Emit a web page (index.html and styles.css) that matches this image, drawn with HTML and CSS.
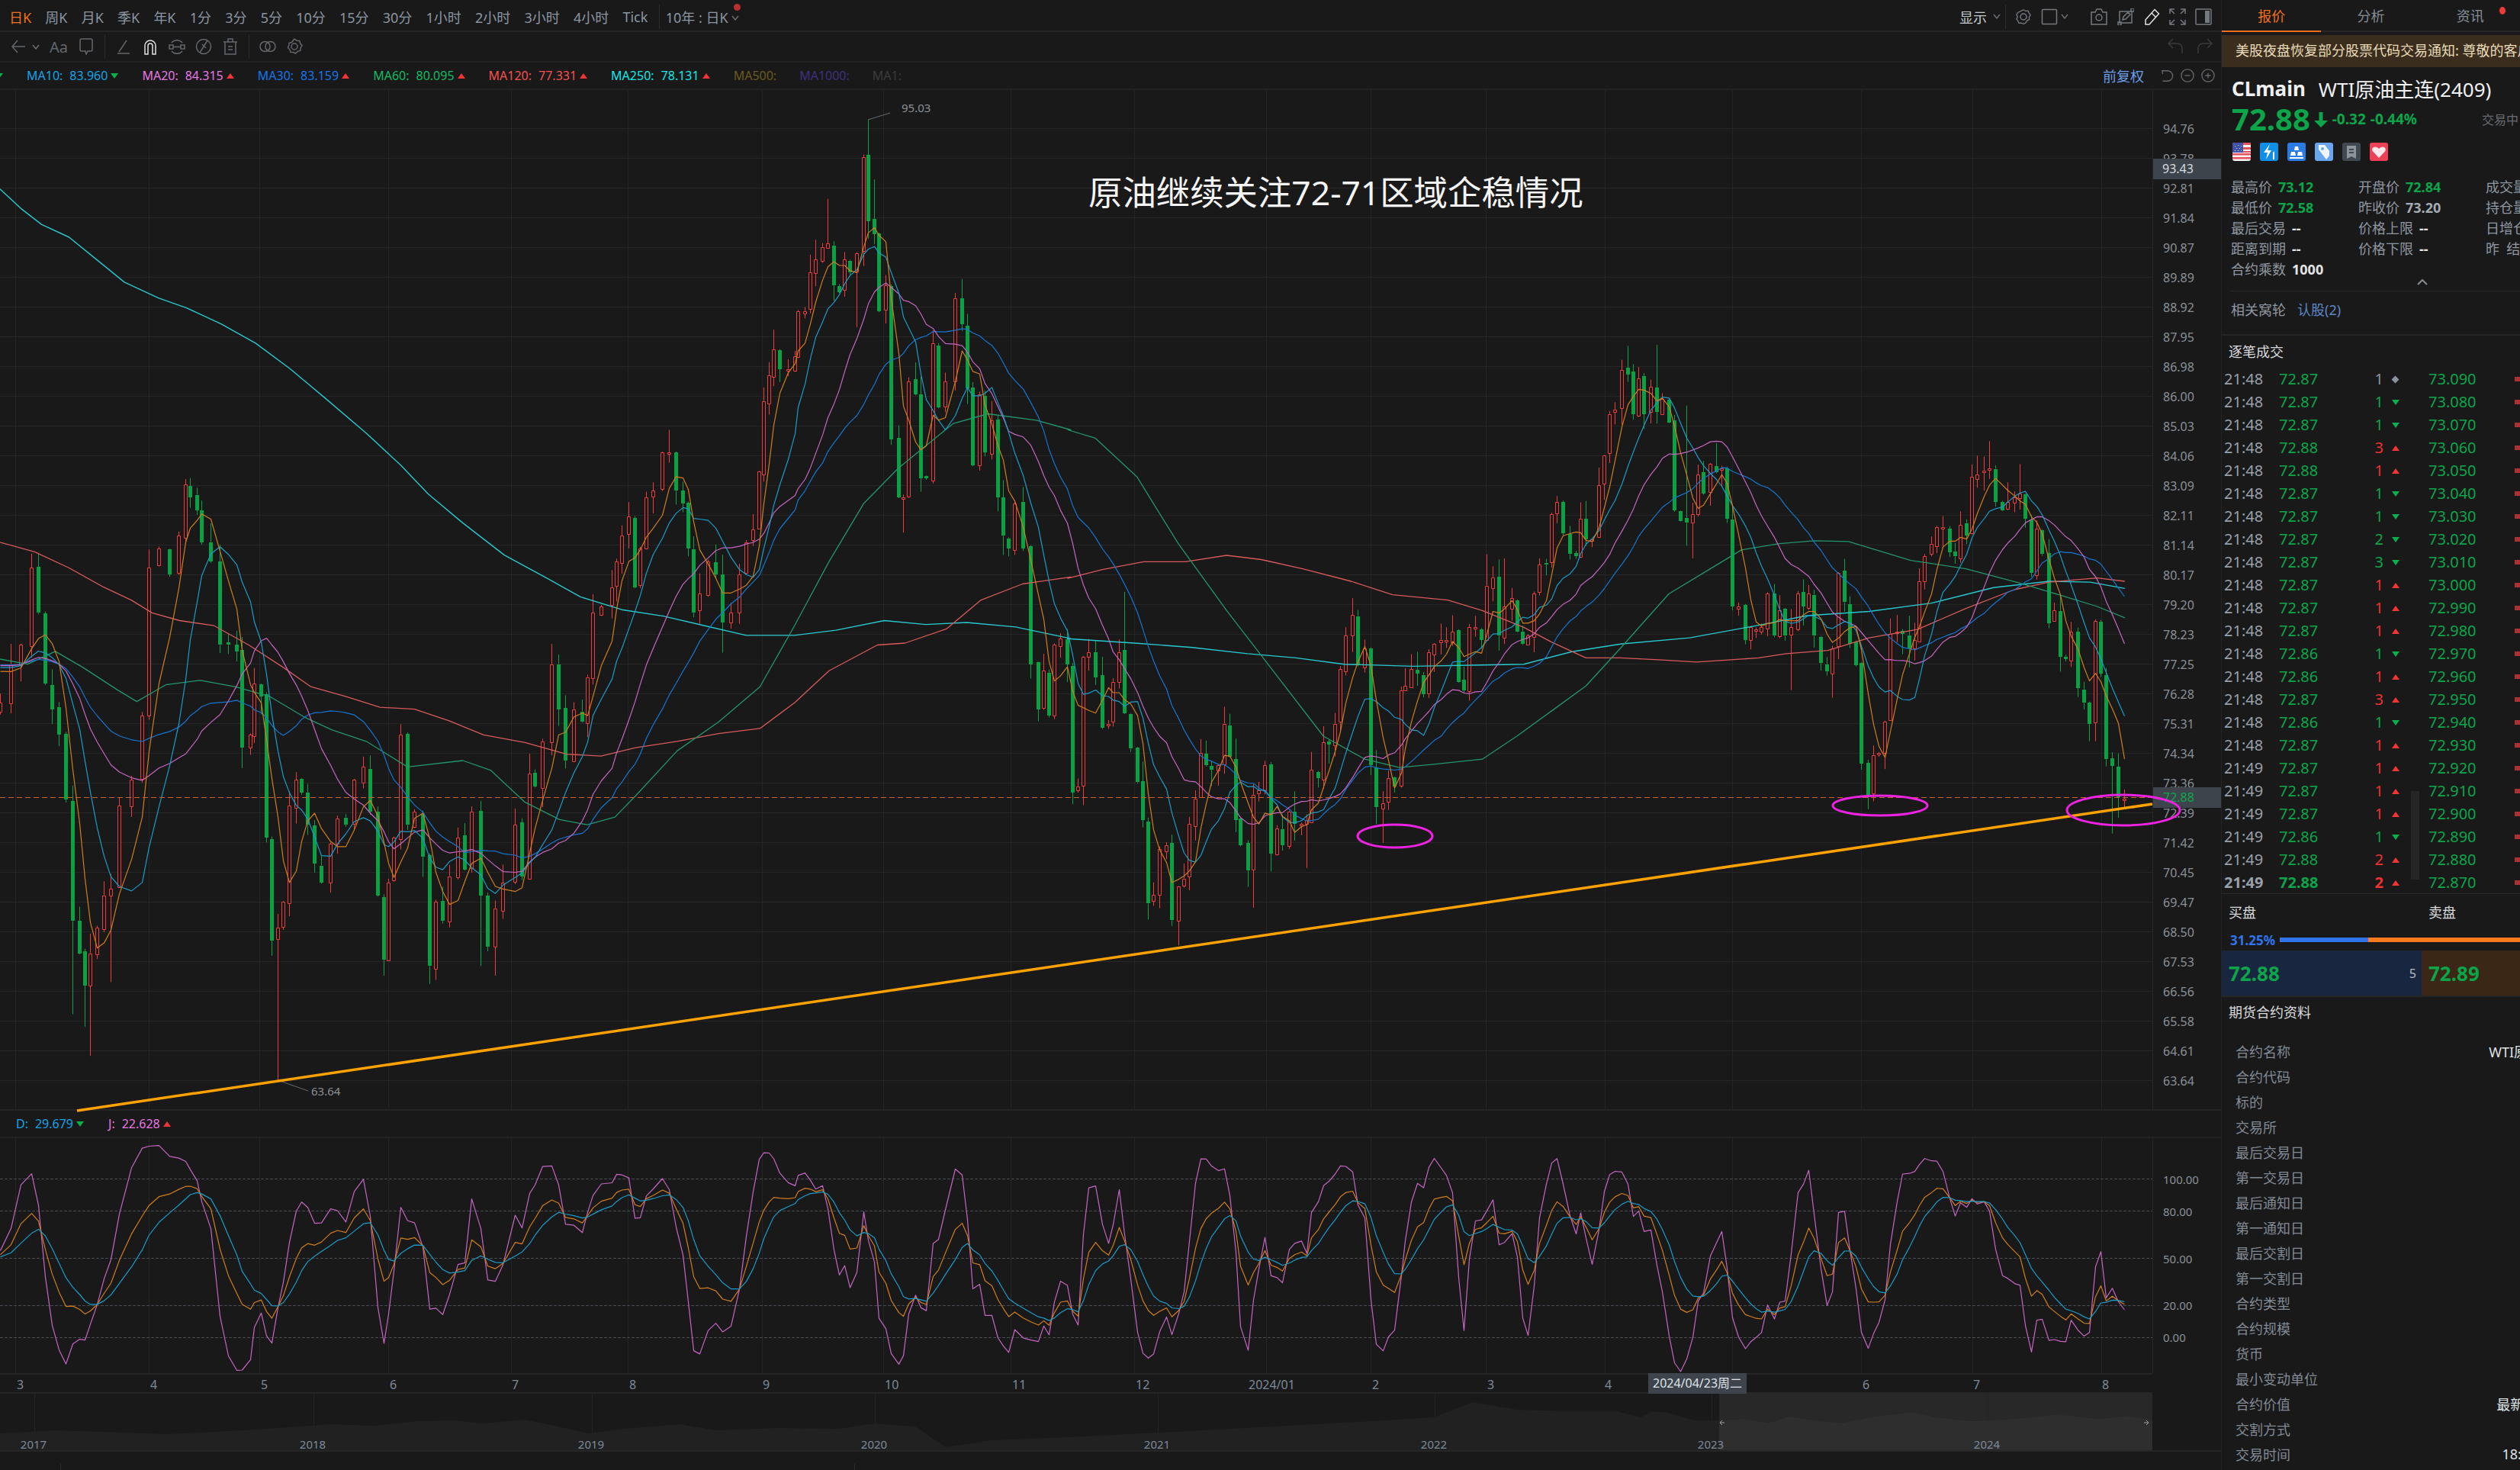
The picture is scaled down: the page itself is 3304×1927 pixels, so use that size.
FILE: index.html
```html
<!DOCTYPE html>
<html lang="zh-CN">
<head>
<meta charset="utf-8">
<title>CLmain WTI原油主连</title>
<link rel="stylesheet" href="styles.css">
</head>
<body>
<div class="app">
  <main class="main">
    <header class="topbar">
      <nav class="periods">
        <span class="period on">日K</span><span class="period">周K</span><span class="period">月K</span><span class="period">季K</span><span class="period">年K</span><span class="period">1分</span><span class="period">3分</span><span class="period">5分</span><span class="period">10分</span><span class="period">15分</span><span class="period">30分</span><span class="period">1小时</span><span class="period">2小时</span><span class="period">3小时</span><span class="period">4小时</span><span class="period">Tick</span>
        <i class="vsep"></i>
        <span class="period range">10年 : 日K<i class="reddot"></i></span>
        <svg class="chev" viewBox="0 0 10 7"><path d="M1 1l4 5 4-5"/></svg>
      </nav>
      <div class="top-tools">
        <div class="group show"><span class="show-label">显示</span><svg class="chev" viewBox="0 0 10 7"><path d="M1 1l4 5 4-5"/></svg></div>
        <i class="vsep tall"></i>
        <svg class="ico" viewBox="0 0 22 22"><path d="M11 1l3 1.5 3.6-.2 1.6 3.2 2 3-2 3 .2 3.6-3.2 1.6L14 20l-3 1.400L8 20l-3.600.2-1.600-3.200-2-3 1.800-3-1.800-3 2-3.200L8 2.300z" transform="translate(1.100 1.100) scale(.9)"/><circle cx="11" cy="11" r="4"/></svg>
        <div class="group tight"><svg class="ico" viewBox="0 0 22 22"><rect x="1.500" y="1.500" width="19" height="19" rx="1"/></svg><svg class="chev" viewBox="0 0 10 7"><path d="M1 1l4 5 4-5"/></svg></div>
        <svg class="ico far" viewBox="0 0 24 24"><path d="M2 6h5l2-4h6l2 4h5v16H2z"/><circle cx="12" cy="13" r="4"/></svg>
        <svg class="ico" viewBox="0 0 22 22"><path d="M3 4h16v15H3z"/><path d="M1 18h4v4H1zM18 0h4v4h-4zM7 15l1-4 6-6 3 3-6 6z"/></svg>
        <svg class="ico bright" viewBox="0 0 22 22"><path d="M15 1.500l5.500 5.500L8 21H3v-6z"/><path d="M11 6l5.500 5.500"/></svg>
        <svg class="ico" viewBox="0 0 22 22"><path d="M1 7V1h6M15 1h6v6M21 15v6h-6M7 21H1v-6M2 2l5 5M20 2l-5 5M20 20l-5-5M2 20l5-5"/></svg>
        <svg class="ico" viewBox="0 0 22 22"><rect x="1" y="1" width="20" height="20" rx="1"/><rect class="solid" x="13" y="3" width="6" height="16"/></svg>
      </div>
    </header>

    <div class="toolbar">
      <svg class="ico dim" viewBox="0 0 22 22"><path d="M20 11H3M10 3l-7 8 7 8"/></svg>
      <svg class="chev small" viewBox="0 0 10 7"><path d="M1 1l4 5 4-5"/></svg>
      <span class="aa">Aa</span>
      <svg class="ico dim" viewBox="0 0 22 22"><path d="M5 1h12a2 2 0 012 2v12a2 2 0 01-2 2h-4l-2 4-1-4H5a2 2 0 01-2-2V3a2 2 0 012-2z"/></svg>
      <i class="vsep short"></i>
      <svg class="ico dim" viewBox="0 0 22 22"><path d="M3 20h16M5 18L15 3"/></svg>
      <svg class="ico bright" viewBox="0 0 22 22"><path d="M4 21V10a7 7 0 0114 0v11h-4V10a3 3 0 00-6 0v11z"/></svg>
      <svg class="ico dim" viewBox="0 0 22 22"><path d="M1 9h5v5H1zM16 9h5v5h-5zM6 11.500h10M4 6a9 9 0 0114 0M18 17a9 9 0 01-14 0"/></svg>
      <svg class="ico dim" viewBox="0 0 22 22"><circle cx="11" cy="11" r="9.500"/><path d="M6 19L16 3M9 8l5 5"/></svg>
      <svg class="ico dim" viewBox="0 0 22 22"><path d="M2 5h18M8 5V1h6v4M4 5v16h14V5M8 11h6M8 15h6"/></svg>
      <i class="vsep short"></i>
      <svg class="ico dim" viewBox="0 0 22 22"><circle cx="7.500" cy="11" r="6.500"/><circle cx="14.500" cy="11" r="6.500"/></svg>
      <svg class="ico dim" viewBox="0 0 22 22"><path d="M11 1l3 2.200 3.700.2 1 3.400 2.300 3-1.800 2.900-.5 3.700-3.500 1-2.700 2.600-3-1.400-3.600-.2-1-3.400-2.400-2.700 1.400-3.200L4 6.500l3.400-1z"/><circle cx="11" cy="11" r="4"/></svg>
      <div class="undo">
        <svg class="ico faint" viewBox="0 0 22 22"><path d="M8 1L2 7l6 6M2 7h12a6 6 0 016 6v7"/></svg>
        <svg class="ico faint" viewBox="0 0 22 22"><path d="M14 1l6 6-6 6M20 7H8a6 6 0 00-6 6v7"/></svg>
      </div>
    </div>

    <div class="legend">
      <i class="tri down lead"></i>
      <span class="ma"><b class="c-ma10">MA10:</b><b class="c-ma10">83.960</b><i class="tri down"></i></span>
      <span class="ma"><b class="c-ma20">MA20:</b><b class="c-ma20">84.315</b><i class="tri up"></i></span>
      <span class="ma"><b class="c-ma30">MA30:</b><b class="c-ma30">83.159</b><i class="tri up"></i></span>
      <span class="ma"><b class="c-ma60">MA60:</b><b class="c-ma60">80.095</b><i class="tri up"></i></span>
      <span class="ma"><b class="c-ma120">MA120:</b><b class="c-ma120">77.331</b><i class="tri up"></i></span>
      <span class="ma"><b class="c-ma250">MA250:</b><b class="c-ma250">78.131</b><i class="tri up"></i></span>
      <span class="ma dimma"><b class="c-ma500">MA500:</b></span>
      <span class="ma dimma"><b class="c-ma1000">MA1000:</b></span>
      <span class="ma dimma"><b class="c-ma1">MA1:</b></span>
      <div class="adjust">
        <span class="adj-label">前复权</span>
        <svg class="ico dim small" viewBox="0 0 20 20"><path d="M3 2l1 6M3 3h8a7 7 0 010 15H4"/></svg>
        <svg class="ico dim small" viewBox="0 0 20 20"><circle cx="10" cy="10" r="9"/><path d="M6 10h8"/></svg>
        <svg class="ico dim small" viewBox="0 0 20 20"><circle cx="10" cy="10" r="9"/><path d="M6 10h8M10 6v8"/></svg>
      </div>
    </div>

    <section class="pane price-pane">
      <div class="plot">
        <svg id="priceChart" class="canvas" viewBox="0 118 2822 1336" width="2822" height="1336"></svg>
        <h1 class="headline">原油继续关注72-71区域企稳情况</h1>
      </div>
      <div class="axis" id="priceAxis">
        <span class="axis-box cross">93.43</span>
        <span class="axis-box last">72.88</span>
      </div>
    </section>

    <div class="kdj-legend">
      <span class="ma"><b class="c-ma10">D:</b><b class="c-ma10">29.679</b><i class="tri down"></i></span>
      <span class="ma"><b class="c-ma20">J:</b><b class="c-ma20">22.628</b><i class="tri up"></i></span>
    </div>

    <section class="pane kdj-pane">
      <div class="plot">
        <svg id="kdjChart" class="canvas" viewBox="0 1492 2822 308" width="2822" height="308"></svg>
      </div>
      <div class="kdj-axis"><span>100.00</span><span>80.00</span><span>50.00</span><span>20.00</span><span>0.00</span></div>
    </section>

    <div class="time-axis" id="timeAxis">
      <span class="axis-box stamp">2024/04/23周二</span>
    </div>

    <section class="pane overview-pane">
      <div class="plot">
        <svg id="overview" class="canvas" viewBox="0 1827 2822 74" width="2822" height="74"></svg>
      </div>
    </section>

    <nav class="indicators">
      <span class="ind-lead">JS &gt;</span><i class="vsep mini"></i>
      <span>WMSR</span><span>MAVOL</span><span>VOL</span><span>MACD</span><span class="on">KDJ</span><span>RSI</span><span>ARBR</span><span>CR</span><span>DMA</span><span>EMV</span><span>BIAS</span><span>CCI</span><span>DMI</span><span>MTM</span><span>OSC</span><span>PSY</span><span>VR</span><i class="vsep mini"></i><span class="on">财报转折</span>
    </nav>
  </main>

  <aside class="panel">
    <div class="tabs">
      <span class="tab active">报价</span>
      <span class="tab">分析</span>
      <span class="tab">资讯<i class="reddot tabdot"></i></span>
    </div>
    <div class="notice">美股夜盘恢复部分股票代码交易通知: 尊敬的客户，您好</div>
    <div class="name"><b>CLmain</b><span>WTI原油主连(2409)</span></div>
    <div class="quote">
      <b class="last-price">72.88</b>
      <svg class="arrow" viewBox="0 0 18 20"><path d="M6.500 0h5v11H18L9 20 0 11h6.500z"/></svg>
      <b class="change">-0.32</b><b class="change">-0.44%</b>
      <span class="status">交易中</span>
    </div>
    <div class="badges">
      <svg class="badge" viewBox="0 0 24 24"><rect width="24" height="24" rx="3" fill="#f4f4f4"/><path d="M0 14h24v2.500H0zM0 19h24v2.500H0z" fill="#e8505b"/><path d="M3 0h21v3H0a3 3 0 013-3zM12 6h12v3H12zM12 11h12v2H12z" fill="#e8505b"/><path d="M3 0h11v13H0V3a3 3 0 013-3z" fill="#3f51b5"/><path d="M3 4h1v1H3zM7 3h1v1H7zM11 4h1v1h-1zM5 7h1v1H5zM9 7h1v1H9zM3 10h1v1H3zM7 10h1v1H7zM11 10h1v1h-1z" fill="#fff"/></svg>
      <svg class="badge" viewBox="0 0 24 24"><rect width="24" height="24" rx="3" fill="#0f8fe8"/><path d="M13 2L5 13h5l-2 9 7-12h-5z" fill="#fff"/><path d="M17 13l2-2v11h-2z" fill="#fff"/></svg>
      <svg class="badge" viewBox="0 0 24 24"><rect width="24" height="24" rx="3" fill="#2a7be4"/><path d="M10 5h4l1 5H9zM5 12h5l1 5H4zM14 12h5l1 5h-7zM3 19h18v2H3z" fill="#fff"/></svg>
      <svg class="badge" viewBox="0 0 24 24"><rect width="24" height="24" rx="3" fill="#6aa5ef"/><path d="M5 3h8l6 8v6l-4 5-10-13z" fill="#f1f6fd"/><circle cx="10" cy="8" r="2" fill="#6aa5ef"/></svg>
      <svg class="badge" viewBox="0 0 24 24"><rect width="24" height="24" rx="3" fill="#414850"/><path d="M6 4h12v17l-6-3-6 3z" fill="#8d949c"/><path d="M9 8h6v2H9zM9 12h6v2H9z" fill="#414850"/></svg>
      <svg class="badge" viewBox="0 0 24 24"><rect width="24" height="24" rx="3" fill="#ee4057"/><path d="M12 20L4 11.500C1 7 7 2.500 12 8c5-5.500 11-1 8 3.500z" fill="#fde8ea"/></svg>
    </div>
    <div class="stats">
      <div class="stat"><span>最高价</span><b class="green">73.12</b></div><div class="stat"><span>开盘价</span><b class="green">72.84</b></div><div class="stat"><span>成交量</span><b class="plain">--</b></div>
      <div class="stat"><span>最低价</span><b class="green">72.58</b></div><div class="stat"><span>昨收价</span><b class="muted">73.20</b></div><div class="stat"><span>持仓量</span><b class="plain">--</b></div>
      <div class="stat"><span>最后交易</span><b class="plain">--</b></div><div class="stat"><span>价格上限</span><b class="plain">--</b></div><div class="stat"><span>日增仓</span><b class="plain">--</b></div>
      <div class="stat"><span>距离到期</span><b class="plain">--</b></div><div class="stat"><span>价格下限</span><b class="plain">--</b></div><div class="stat"><span>昨&nbsp;&nbsp;结算</span><b class="plain">--</b></div>
      <div class="stat"><span>合约乘数</span><b class="plain">1000</b></div>
    </div>
    <div class="collapse"><svg viewBox="0 0 14 8"><path d="M1 7l6-6 6 6"/></svg></div>
    <div class="warrants"><span>相关窝轮</span><a>认股(2)</a></div>
    <h2 class="section-title first">逐笔成交</h2>
    <div class="ticks" id="ticks"><i class="scroll"></i></div>
    <div class="book-head"><span>买盘</span><span>卖盘</span></div>
    <div class="ratio"><b>31.25%</b><div class="ratio-bar"><i class="bid-part"></i></div></div>
    <div class="book">
      <div class="bid"><b>72.88</b><span>5</span></div>
      <div class="ask"><b>72.89</b></div>
    </div>
    <h2 class="section-title second">期货合约资料</h2>
    <dl class="contract">
      <div><dt>合约名称</dt><dd>WTI原油主连</dd></div>
      <div><dt>合约代码</dt><dd></dd></div>
      <div><dt>标的</dt><dd></dd></div>
      <div><dt>交易所</dt><dd></dd></div>
      <div><dt>最后交易日</dt><dd></dd></div>
      <div><dt>第一交易日</dt><dd></dd></div>
      <div><dt>最后通知日</dt><dd></dd></div>
      <div><dt>第一通知日</dt><dd></dd></div>
      <div><dt>最后交割日</dt><dd></dd></div>
      <div><dt>第一交割日</dt><dd></dd></div>
      <div><dt>合约类型</dt><dd></dd></div>
      <div><dt>合约规模</dt><dd></dd></div>
      <div><dt>货币</dt><dd></dd></div>
      <div><dt>最小变动单位</dt><dd></dd></div>
      <div><dt>合约价值</dt><dd>最新价*100</dd></div>
      <div><dt>交割方式</dt><dd></dd></div>
      <div><dt>交易时间</dt><dd>18:00-5:00</dd></div>
    </dl>
  </aside>
</div>
<script src="chart.js"></script>
</body>
</html>
```

FILE: styles.css
```css
* { box-sizing: border-box; }
html, body { margin: 0; padding: 0; background: #191919; }
body {
  width: 3304px; height: 1927px; overflow: hidden;
  font-family: "Noto Sans", "Noto Sans CJK SC", sans-serif;
  font-size: 18px; color: #8f97a1;
}
i { font-style: normal; }
b { font-weight: 400; }
svg { display: block; }

.app { display: flex; width: 3304px; height: 1927px; }
.main { width: 2912px; flex: none; display: flex; flex-direction: column; overflow: hidden; }

/* top bar */
.topbar { height: 42px; flex: none; display: flex; align-items: center; justify-content: space-between; border-bottom: 2px solid #252525; padding-top: 3px; }
.periods { display: flex; align-items: center; gap: 18.2px; padding-left: 12px; color: #8b96a3; }
.period { position: relative; white-space: nowrap; }
.period.on { color: #f2701d; }
.range { margin-left: -10px; }
.vsep { width: 1px; height: 32px; background: #2c2c2c; display: block; flex: none; }
.periods .vsep { margin-left: -4px; }
.vsep.mini { height: 30px; }
.reddot { position: absolute; width: 9px; height: 9px; border-radius: 50%; background: #b92f2f; right: -16px; top: -4px; }
.chev { width: 10px; height: 7px; fill: none; stroke: #6b7178; stroke-width: 1.4; flex: none; }
.periods .chev { margin-left: -14px; margin-top: 3px; }
.top-tools { display: flex; align-items: center; gap: 12px; padding-right: 12px; }
.group { display: flex; align-items: center; gap: 8px; }
.group.tight { gap: 4px; }
.group.show { margin-right: -6px; }
.show-label { color: #c6c9cd; }
.ico { width: 22px; height: 22px; fill: none; stroke: #74797f; stroke-width: 1.5; flex: none; }
.ico.far { width: 24px; height: 24px; margin-left: 16px; }
.ico.bright { stroke: #e2e2e2; }
.ico.dim { stroke: #63676c; }
.ico.faint { stroke: #383a3c; }
.ico.small { width: 18px; height: 18px; }
.ico .solid { fill: #74797f; stroke: none; }

/* tool row */
.toolbar { height: 40px; flex: none; display: flex; align-items: center; gap: 13px; padding-left: 13px; border-bottom: 2px solid #232323; }
.chev.small { margin-left: -6px; }
.aa { width: 24px; color: #63676c; font-size: 20px; }
.undo { margin-left: auto; display: flex; gap: 17px; padding-right: 10px; }

/* moving-average legend */
.legend { height: 36px; flex: none; display: flex; align-items: center; gap: 31px; padding-left: 2px; font-size: 16px; white-space: nowrap; border-bottom: 2px solid #232323; overflow: hidden; }
.ma { display: flex; align-items: center; gap: 9px; }
.ma .tri { margin-left: -5px; }
.dimma { margin-right: -1px; }
.tri { display: block; width: 0; height: 0; border-left: 5.5px solid transparent; border-right: 5.5px solid transparent; flex: none; }
.tri.down { border-top: 7px solid #0dae4c; }
.tri.up { border-bottom: 7px solid #f23535; }
.tri.lead { margin-left: -8px; }
.c-ma10 { color: #16a3e6; }
.c-ma20 { color: #e678e2; }
.c-ma30 { color: #1476ec; }
.c-ma60 { color: #14bb63; }
.c-ma120 { color: #f65050; }
.c-ma250 { color: #16e7e7; }
.c-ma500 { color: #6b5a1c; }
.c-ma1000 { color: #40307f; }
.c-ma1 { color: #3c3c3c; }
.adjust { margin-left: auto; display: flex; align-items: center; gap: 9px; padding-right: 8px; }
.adj-label { color: #6a9de8; font-size: 18px; margin-right: 12px; }

/* chart panes */
.pane { display: flex; flex: none; }
.plot { position: relative; width: 2822px; flex: none; }
.canvas { position: relative; z-index: 2; overflow: visible; }
.price-pane { height: 1336px; }
.kdj-pane { height: 308px; }
.overview-pane { height: 74px; }
.headline { position: absolute; z-index: 3; left: 1427px; top: 105px; margin: 0; font-size: 44.4px; line-height: 58px; font-weight: 400; color: #f4f4f4; white-space: nowrap; }
.axis { position: relative; width: 90px; flex: none; padding-top: 32px; font-size: 16px; color: #8a9097; border-left: 1px solid #262626; }
.axis-label { display: block; height: 39px; line-height: 39px; padding-left: 13px; }
.axis-box { position: absolute; z-index: 1; background: #3d444c; height: 27px; line-height: 27px; font-size: 16px; white-space: nowrap; }
.axis-box.cross { left: 0; width: 90px; top: 90px; padding-left: 12px; color: #d6dade; }
.axis-box.last { left: 0; width: 90px; top: 914px; padding-left: 13px; color: #0da84b; }
.kdj-legend { height: 38px; flex: none; display: flex; align-items: center; gap: 32px; padding-left: 21px; font-size: 16px; border-top: 2px solid #252525; border-bottom: 2px solid #232323; }
.kdj-axis { width: 90px; flex: none; display: grid; grid-template-rows: 42px 62px 61px 42px 24px; align-content: start; padding: 42px 0 0 13px; font-size: 15px; line-height: 24px; color: #8a9097; border-left: 1px solid #262626; }
.time-axis { position: relative; height: 27px; flex: none; width: 2822px; border-top: 2px solid #262626; border-bottom: 2px solid #262626; font-size: 16px; line-height: 27px; color: #7d8a9a; }
.time-axis span { position: absolute; top: 0; }
.axis-box.stamp { left: 2161px; width: 129px; top: -2px; height: 27px; padding-left: 6px; color: #dfe3e8; z-index: 2; }
.indicators { height: 26px; flex: none; display: flex; gap: 30px; padding: 22px 0 0 40px; font-size: 15px; line-height: 22px; color: #8a9097; border-top: 2px solid #262626; white-space: nowrap; overflow: hidden; }
.indicators .on { color: #f2701d; }
.indicators .vsep { margin: -6px -16px 0 -16px; }
.ind-lead { color: #7d8185; }

/* right panel */
.panel { width: 392px; flex: none; overflow: hidden; border-left: 1px solid #242424; white-space: nowrap; position: relative; }
.tabs { height: 42px; display: flex; border-bottom: 2px solid #262626; font-size: 18px; }
.tab { position: relative; width: 132px; height: 42px; line-height: 42px; text-align: center; color: #848c96; }
.tab.active { color: #f2701d; border-bottom: 2px solid #f2701d; }
.reddot.tabdot { background: #ef3a3a; width: 8px; height: 10px; right: 19px; top: 9px; }
.notice { margin-top: 4px; height: 42px; line-height: 41px; padding-left: 18px; background: #3a2d1e; color: #e9dcb9; font-size: 18px; overflow: hidden; }
.name { margin-top: 8px; height: 40px; display: flex; align-items: center; gap: 17px; padding-left: 13px; font-size: 26px; color: #eef0f2; }
.name b { font-weight: 700; }
.quote { height: 40px; display: flex; align-items: center; padding-left: 13px; color: #0ca54a; position: relative; }
.last-price { font-size: 40px; font-weight: 700; line-height: 40px; }
.arrow { width: 18px; height: 20px; fill: #0ca54a; margin: 2px 6px 0 5px; }
.change { font-size: 19px; font-weight: 700; margin-right: 6px; }
.status { position: absolute; left: 341px; font-size: 16px; color: #686d73; }
.badges { margin-top: 11px; display: flex; gap: 12px; padding-left: 14px; }
.badge { width: 24px; height: 24px; }
.stats { margin-top: 21px; padding-left: 12px; display: grid; grid-template-columns: 167px 167px 167px; grid-auto-rows: 27px; width: 520px; font-size: 18px; line-height: 27px; color: #8f97a1; }
.stat { display: flex; gap: 8px; }
.stat b { font-weight: 700; }
.green { color: #0ca54a; }
.muted { color: #a5abb2; }
.plain { color: #e2e4e6; }
.collapse { height: 15px; margin-left: 12px; border-bottom: 1px solid #2a2a2a; display: flex; justify-content: center; padding-left: 122px; width: 380px; }
.collapse svg { width: 14px; height: 8px; fill: none; stroke: #8a8f94; stroke-width: 2; margin-top: -1px; }
.warrants { height: 46px; display: flex; align-items: center; gap: 15px; padding: 0 0 0 12px; color: #8f97a1; }
.warrants a { color: #5d87c8; }
.section-title { margin: 0; font-size: 18px; font-weight: 400; color: #d8dadc; padding-left: 9px; }
.section-title.first { height: 44px; line-height: 42px; border-top: 2px solid #262626; margin-top: 10px; }
.section-title.second { height: 45px; line-height: 41px; }
.ticks { position: relative; height: 690px; border-bottom: 1px solid #2a2a2a; font-size: 20px; line-height: 30px; }
.tick { height: 30px; display: grid; grid-template-columns: 72px 117px 20px 10px 11px 38px 113px 8px; align-items: center; padding-left: 3px; }
.tick .t { color: #98a0aa; }
.tick .p, .tick .d { color: #0ca54a; }
.tick .q { text-align: right; }
.tick .q.up-q { color: #ee3131; }
.tick .q.dn-q { color: #0ca54a; }
.tick .q.flat-q { color: #8a93a0; }
.tick.latest b { font-weight: 700; }
.tick .mark { grid-column: 5; justify-self: center; }
.tick .d { grid-column: 7; }
.tick .depth { grid-column: 8; height: 6px; width: 8px; background: #ad3131; }
.diamond { display: block; width: 7px; height: 7px; background: #8b93a0; transform: rotate(45deg); }
.scroll { position: absolute; left: 248px; top: 555px; width: 11px; height: 116px; background: #252626; }
.book-head { height: 46px; display: flex; align-items: center; padding-left: 9px; color: #d8dadc; }
.book-head span:first-child { width: 262px; }
.ratio { height: 28px; display: flex; align-items: center; padding-left: 11px; gap: 6px; }
.ratio b { color: #2f74ea; font-weight: 700; font-size: 17px; width: 62px; }
.ratio-bar { width: 330px; height: 6px; background: #ff7a1c; display: flex; flex: none; }
.bid-part { display: block; width: 116px; background: #2f74ea; }
.book { height: 61px; display: flex; border-bottom: 2px solid #262626; }
.book b { font-size: 26px; font-weight: 700; color: #0ca54a; }
.bid { width: 262px; background: #18263f; display: flex; align-items: center; justify-content: space-between; padding: 0 7px 0 9px; }
.bid span { color: #b8bec6; font-size: 16px; }
.ask { flex: 1; background: #3a2716; display: flex; align-items: center; padding-left: 9px; }
.contract { margin: 9px 0 0; width: 455px; }
.contract div { height: 33px; display: flex; justify-content: space-between; align-items: center; padding-left: 18px; }
.contract dt { color: #818a95; }
.contract dd { margin: 0; color: #dfe2e6; }
```

FILE: chart.js
```js
// Digitised daily closes of the reference chart: [x, y] pairs in two measuring grids.
var A = [0,940,15,880,30,850,45,730,55,800,65,910,75,950,85,990,95,1090,105,1280,115,1330,122,1380,130,1330,140,1290,150,1240,160,1230,172,1100,190,1060,205,960,215,730,230,700,245,740,258,680,268,600,275,620,285,640,292,690,305,720,318,850,330,850,342,860,350,1010,362,990,368,910,378,930,385,1150,393,1310,402,1290,410,1250,418,1100,428,1060,436,1080,445,1130,455,1190,465,1220,478,1160,488,1120,500,1130,512,1060,525,1040,535,1110,547,1240,555,1340,562,1220,570,1150,580,990,590,1130,600,1110,612,1180,622,1350,630,1250,640,1280,650,1210,662,1150,672,1200,682,1110,695,1240,706,1320,716,1260,728,1220,745,1130,755,1210,766,1050,774,1070,785,1000,798,880,808,950,818,1030,830,950,842,970,850,900,858,800,870,790,885,760,892,720,900,680,910,650,918,760,926,700,935,620,945,610,958,550,968,550,978,610,988,630,996,700,1004,800,1012,770,1025,720,1036,740,1046,815,1058,800,1070,740,1080,690,1090,670,1098,580,1105,470,1113,430,1120,390,1128,420,1140,420,1150,400,1155,330,1165,330,1172,270,1180,250,1190,230,1198,225,1207,290,1214,300,1222,250,1230,270,1240,240,1250,90,1256,190,1265,210,1272,330,1282,290,1290,530,1300,620,1307,620,1315,440,1325,460,1332,590,1340,590,1350,380,1358,480,1368,440,1382,310,1392,350,1400,450,1408,570,1418,460,1425,550,1435,500,1444,620,1452,680,1460,700,1468,630,1480,700,1492,880,1502,950,1510,890,1518,960,1526,850,1535,840,1544,880,1552,1080];
var B = [14,1150,22,840,30,830,40,890,50,1010,58,1000,65,900,74,830,82,975,90,1060,100,1140,108,1230,116,1430,124,1410,132,1300,142,1290,150,1470,160,1390,168,1370,176,1240,184,1180,192,1070,200,1100,208,1110,218,1100,226,1000,234,1080,243,1230,250,1290,260,1350,268,1170,276,1160,285,1100,294,1310,302,1250,310,1290,320,1210,328,1240,338,1240,345,1230,352,1110,362,1130,370,1045,378,1050,386,1000,394,870,402,790,412,740,420,860,430,820,438,1100,446,1200,456,1190,464,1130,472,1150,482,920,488,910,497,870,506,880,514,930,522,830,530,810,540,800,548,800,556,780,565,900,573,920,581,770,590,770,598,800,606,670,615,650,624,790,632,720,642,700,650,780,658,810,666,790,675,690,682,620,692,620,700,500,708,470,716,545,726,595,735,600,742,510,750,560,758,560,768,430,776,360,784,260,792,250,802,155,810,165,818,260,826,175,834,260,844,195,852,255,860,225,870,280,878,490,886,515,895,520,904,500,912,405,920,450,930,380,938,400,946,390,954,510,962,720,970,720,980,800,988,770,996,775,1004,770,1012,690,1022,790,1030,730,1038,790,1047,770,1056,690,1064,720,1072,690,1080,790,1090,855,1098,875,1106,820,1115,640,1124,710,1132,810,1140,860,1148,1095,1158,1170,1166,1075,1174,1070,1182,995,1190,785,1200,780,1208,785,1218,820,1225,800,1232,660,1240,600,1250,570,1258,530,1266,530,1276,590,1284,600,1292,525,1300,550,1308,410,1316,405,1326,395,1334,390,1342,470,1352,490,1360,470,1370,460,1378,450,1386,510,1394,640,1402,535,1410,595,1420,760,1428,730,1436,840,1444,845,1452,780,1462,915,1470,950,1478,1000,1487,755,1495,880,1503,1085,1511,1101,1520,1176,1529,1180];
var WICKS_A = [131,1490,105,1425,122,1445,165,1375,553,1365,622,1378,716,1365,690,1350,1307,675,1197,155,1393,280,1265,125,1238,355,968,515,1050,862,402,1528,1256,32];
var WICKS_B = [810,97,853,95,160,1530,82,685,268,1440,345,1345,412,705,455,1285,447,1240,937,330,1335,325,1378,380,1158,1205,1512,1263,1520,1225,895,240,905,605,893,575,1048,920,1107,938,605,595,632,605];
var MA250 = [[0,140,30,170,60,195,100,215,140,250,180,285,230,310,270,325,320,350,370,380,420,420,470,465,530,520,580,570,620,615,670,660,730,710,790,745,840,775,900,795,960,805,1020,820,1080,835,1150,835,1210,827,1280,812,1340,818,1400,815,1470,822,1550,840],
             [0,797,100,808,180,818,260,833,330,843,400,858,500,863,600,860,660,858,730,828,800,810,900,795,1000,765,1070,742,1160,732,1250,712,1340,675,1420,660,1480,662,1530,677]];
var MA120 = [[0,690,50,705,100,730,150,760,190,780,220,800,260,812,310,820,360,850,410,885,450,915,500,930,550,947,600,950,650,968,700,990,760,1002,820,1020,870,1023,920,1010,980,1000,1040,988,1100,980,1150,940,1200,890,1270,850,1310,847,1370,825,1420,780,1480,755,1550,744],
             [0,653,50,632,110,613,170,613,230,598,280,608,340,630,410,660,470,692,550,705,600,730,660,770,700,805,750,843,800,843,860,848,910,853,1000,843,1040,833,1100,825,1160,795,1230,775,1300,725,1370,680,1420,662,1490,652,1530,660]];
var MA60 = [[0,872,40,880,80,860,120,885,170,920,198,938,240,912,290,905,340,915,390,930,440,962,480,982,530,1000,590,1040,670,1030,710,1045,760,1095,810,1122,850,1130,890,1118,920,1085,980,1015,1040,970,1100,915,1150,820,1200,720,1250,630,1300,575,1380,505,1430,490,1500,500,1550,515],
            [0,298,40,318,100,410,160,570,230,730,300,880,370,1030,430,1085,480,1105,530,1097,600,1085,650,1030,700,970,750,910,800,820,870,690,930,630,975,585,1030,570,1080,563,1130,565,1220,610,1300,630,1380,665,1440,695,1490,720,1530,747]];
var OVERVIEW = [0,1879,70,1875,140,1877,218,1880,281,1877,351,1873,435,1867,491,1869,547,1863,596,1862,632,1866,688,1861,723,1868,772,1879,807,1874,891,1867,940,1875,1018,1872,1100,1873,1146,1866,1200,1870,1240,1897,1300,1888,1400,1884,1517,1878,1650,1871,1780,1864,1880,1858,1930,1838,1990,1848,2060,1850,2100,1850,2120,1850,2151,1858,2166,1850,2187,1852,2222,1862,2253,1862,2284,1860,2319,1865,2345,1857,2386,1863,2416,1865,2457,1857,2508,1851,2539,1858,2585,1863,2641,1860,2697,1854,2753,1860,2789,1856,2822,1862];

function sx1(v) { return v / 1.104; }
function sy1(v) { return 130 + v / 1.188; }
function sx2(v) { return 1400 + v / 1.104; }
function sy2(v) { return 400 + v / 1.823; }
function toPoints(flat, fx, fy) {
  var out = [];
  for (var i = 0; i < flat.length; i += 2) out.push([fx(flat[i]), fy(flat[i + 1])]);
  return out;
}
function joined(pair) { return toPoints(pair[0], sx1, sy1).concat(toPoints(pair[1], sx2, sy2)); }

var seed = 12345;
function rnd() { seed = (seed * 1103515245 + 12345) % 2147483648; return seed / 2147483648; }

var points = toPoints(A, sx1, sy1).concat(toPoints(B, sx2, sy2));
var bars = points.map(function (p, i) {
  var c = p[1];
  var o = i ? points[i - 1][1] + (rnd() - 0.5) * 7 : c + 12;
  if (Math.abs(o - c) < 2) o = c + 2;
  var a = rnd(), b = rnd();
  return { x: Math.round(p[0]) + 0.5, o: o, c: c,
           h: Math.min(o, c) - 1 - a * a * 26, l: Math.max(o, c) + 1 + b * b * 26 };
});
function extreme(x, y) {
  var best = bars[0];
  bars.forEach(function (b) { if (Math.abs(b.x - x) < Math.abs(best.x - x)) best = b; });
  if (y < Math.min(best.o, best.c)) best.h = Math.min(best.h, y); else best.l = Math.max(best.l, y);
}
toPoints(WICKS_A, sx1, sy1).concat(toPoints(WICKS_B, sx2, sy2)).forEach(function (p) { extreme(p[0], p[1]); });
var tail = bars[bars.length - 1]; tail.h = 1035; tail.l = 1058;

var NS = "http://www.w3.org/2000/svg";
function add(parent, tag, attrs, text) {
  var el = document.createElementNS(NS, tag);
  for (var k in attrs) el.setAttribute(k, attrs[k]);
  if (text) el.textContent = text;
  parent.appendChild(el);
  return el;
}
function polyline(parent, pts, color, width) {
  add(parent, "polyline", { points: pts.map(function (p) { return p[0].toFixed(1) + "," + p[1].toFixed(1); }).join(" "), fill: "none", stroke: color, "stroke-width": width || 1.2, "stroke-linejoin": "round" });
}
function movingAverage(n) {
  var out = [], PRE = 870;
  bars.forEach(function (b, i) {
    var s = 0;
    for (var j = i - n + 1; j <= i; j++) s += j < 0 ? PRE : bars[j].c;
    out.push([b.x, s / n]);
  });
  return out;
}

var GRID_X = [20, 195, 340, 509, 670, 823, 999, 1158, 1325, 1487, 1660, 1797, 1948, 2104, 2271, 2440, 2586, 2755];
var TICK_X = [[27, "3"], [202, "4"], [347, "5"], [516, "6"], [676, "7"], [830, "8"], [1005, "9"], [1165, "10"], [1332, "11"], [1494, "12"], [1642, "2024/01"], [1804, "2"], [1955, "3"], [2109, "4"], [2447, "6"], [2592, "7"], [2761, "8"]];

function verticals(svg, top, bottom) {
  var d = GRID_X.map(function (x) { return "M" + (x + 0.5) + " " + top + "V" + bottom; }).join("");
  add(svg, "path", { d: d, stroke: "#252525", "stroke-width": 1 });
}

/* price pane */
var price = document.getElementById("priceChart");
var LABELS = ["94.76","93.78","92.81","91.84","90.87","89.89","88.92","87.95","86.98","86.00","85.03","84.06","83.09","82.11","81.14","80.17","79.20","78.23","77.25","76.28","75.31","74.34","73.36","72.39","71.42","70.45","69.47","68.50","67.53","66.56","65.58","64.61","63.64"];
var hd = "";
LABELS.forEach(function (t, i) { hd += "M0 " + (168.5 + i * 39) + "H2822"; });
add(price, "path", { d: hd, stroke: "#262626", "stroke-width": 1 });
verticals(price, 118, 1454);

var wickG = "", wickR = "", bodyG = "", bodyR = "";
bars.forEach(function (b) {
  var up = b.c < b.o, top = Math.min(b.o, b.c), bot = Math.max(b.o, b.c);
  var w = "M" + b.x + " " + b.h.toFixed(1) + "V" + top.toFixed(1) + "M" + b.x + " " + bot.toFixed(1) + "V" + b.l.toFixed(1);
  if (up) {
    wickR += w;
    bodyR += "M" + (b.x - 2) + " " + (Math.round(top) + 0.5) + "h4V" + (Math.round(bot) + 0.5) + "h-4z";
  } else {
    wickG += w;
    bodyG += "M" + (b.x - 2.5) + " " + Math.round(top) + "h5V" + Math.round(bot) + "h-5z";
  }
});
add(price, "path", { d: wickG, stroke: "#0aa145", "stroke-width": 1, fill: "none" });
add(price, "path", { d: bodyG, fill: "#0aa145" });
add(price, "path", { d: wickR, stroke: "#ee3b3b", "stroke-width": 1, fill: "none" });
add(price, "path", { d: bodyR, stroke: "#ee3b3b", "stroke-width": 1, fill: "#191919" });

polyline(price, joined(MA250), "#27c9cf", 1.4);
polyline(price, joined(MA120), "#d85a5a", 1.3);
polyline(price, joined(MA60), "#23966a", 1.3);
polyline(price, movingAverage(30), "#1576d2");
polyline(price, movingAverage(20), "#c765c4");
polyline(price, movingAverage(10), "#1a9ccb");
polyline(price, movingAverage(5), "#d17d1c");

add(price, "path", { d: "M1138 157L1167 148", stroke: "#666b70", "stroke-width": 1 });
add(price, "text", { x: 1182, y: 147, fill: "#8a9097", "font-size": 15 }, "95.03");
add(price, "path", { d: "M364 1416L404 1430", stroke: "#666b70", "stroke-width": 1 });
add(price, "text", { x: 408, y: 1436, fill: "#8a9097", "font-size": 15 }, "63.64");

add(price, "path", { d: "M0 1045.5H2822", stroke: "#c9651f", "stroke-width": 1, "stroke-dasharray": "7 4" });
add(price, "path", { d: "M101 1456L2822 1054", stroke: "#ffa200", "stroke-width": 3.5, fill: "none" });
[[1829, 1096, 49, 15], [2465, 1056, 62, 13], [2784, 1062, 74, 20]].forEach(function (e) {
  add(price, "ellipse", { cx: e[0], cy: e[1], rx: e[2], ry: e[3], fill: "none", stroke: "#ee22e2", "stroke-width": 3 });
});

var axis = document.getElementById("priceAxis");
LABELS.forEach(function (t) {
  var s = document.createElement("span");
  s.className = "axis-label";
  s.textContent = t;
  axis.appendChild(s);
});

/* KDJ pane, computed from the candles */
var kdj = document.getElementById("kdjChart");
verticals(kdj, 1492, 1800);
[100, 80, 50, 20, 0].forEach(function (v) {
  var y = Math.round(1753 - 2.08 * v) + 0.5;
  add(kdj, "path", { d: "M0 " + y + "H2822", stroke: "#454b52", "stroke-width": 1, "stroke-dasharray": "4 2" });
});
var K = 50, D = 50, ks = [], ds = [], js = [];
function kdjY(v) { return Math.max(1494, Math.min(1798, 1753 - 2.08 * v)); }
bars.forEach(function (b, i) {
  var hi = 1e9, lo = -1e9;
  for (var j = Math.max(0, i - 8); j <= i; j++) { hi = Math.min(hi, bars[j].h); lo = Math.max(lo, bars[j].l); }
  var rsv = (lo - b.c) / (lo - hi) * 100;
  K = K * 2 / 3 + rsv / 3;
  D = D * 2 / 3 + K / 3;
  ks.push([b.x, kdjY(K)]);
  ds.push([b.x, kdjY(D)]);
  js.push([b.x, kdjY(3 * K - 2 * D)]);
});
polyline(kdj, js, "#c765c4");
polyline(kdj, ks, "#d17d1c");
polyline(kdj, ds, "#1a9ccb");

/* time axis */
var time = document.getElementById("timeAxis");
TICK_X.forEach(function (t) {
  var s = document.createElement("span");
  s.textContent = t[1];
  s.style.left = (t[0] - 5) + "px";
  time.appendChild(s);
});

/* overview strip */
var ov = document.getElementById("overview");
var ovTop = 1827, ovBottom = 1901;
var years = [[44, "2017"], [410, "2018"], [775, "2019"], [1146, "2020"], [1517, "2021"], [1880, "2022"], [2243, "2023"], [2605, "2024"]];
add(ov, "rect", { x: 2254, y: ovTop, width: 568, height: 74, fill: "#282828" });
add(ov, "path", { d: years.map(function (y) { return "M" + (y[0] + 1.5) + " " + ovTop + "V" + ovBottom; }).join(""), stroke: "#242424" });
var area = "M0 1901";
for (var i = 0; i < OVERVIEW.length; i += 2) area += "L" + OVERVIEW[i] + " " + OVERVIEW[i + 1];
area += "L2822 1901z";
add(ov, "path", { d: area, fill: "#212121" });
add(ov, "clipPath", { id: "sel" });
add(document.getElementById("sel"), "rect", { x: 2254, y: ovTop, width: 568, height: 74 });
add(ov, "path", { d: area, fill: "#2e2e2e", "clip-path": "url(#sel)" });
years.forEach(function (y) {
  add(ov, "text", { x: y[0], y: 1899, fill: "#7d8a9a", "font-size": 15, "text-anchor": "middle" }, y[1]);
});
add(ov, "path", { d: "M2261 1865h-6m3-3l-3 3 3 3M2811 1865h6m-3-3l3 3-3 3", stroke: "#9aa0a6", fill: "none", "stroke-width": 1 });

/* tick-by-tick list */
var T = [
  ["21:48","72.87",1,"f","73.090"],["21:48","72.87",1,"d","73.080"],["21:48","72.87",1,"d","73.070"],["21:48","72.88",3,"u","73.060"],
  ["21:48","72.88",1,"u","73.050"],["21:48","72.87",1,"d","73.040"],["21:48","72.87",1,"d","73.030"],["21:48","72.87",2,"d","73.020"],
  ["21:48","72.87",3,"d","73.010"],["21:48","72.87",1,"u","73.000"],["21:48","72.87",1,"u","72.990"],["21:48","72.87",1,"u","72.980"],
  ["21:48","72.86",1,"d","72.970"],["21:48","72.86",1,"u","72.960"],["21:48","72.87",3,"u","72.950"],["21:48","72.86",1,"d","72.940"],
  ["21:48","72.87",1,"u","72.930"],["21:49","72.87",1,"u","72.920"],["21:49","72.87",1,"u","72.910"],["21:49","72.87",1,"u","72.900"],
  ["21:49","72.86",1,"d","72.890"],["21:49","72.88",2,"u","72.880"],["21:49","72.88",2,"u","72.870"]
];
var list = document.getElementById("ticks");
T.forEach(function (r, i) {
  var row = document.createElement("div");
  row.className = "tick" + (i === T.length - 1 ? " latest" : "");
  var cls = r[3] === "u" ? "up-q" : r[3] === "d" ? "dn-q" : "flat-q";
  var mark = r[3] === "u" ? '<i class="mark tri up"></i>' : r[3] === "d" ? '<i class="mark tri down"></i>' : '<i class="mark diamond"></i>';
  row.innerHTML = '<b class="t">' + r[0] + '</b><b class="p">' + r[1] + '</b><b class="q ' + cls + '">' + r[2] + "</b>" + mark + '<span class="d">' + r[4] + '</span><i class="depth"></i>';
  list.appendChild(row);
});
```
